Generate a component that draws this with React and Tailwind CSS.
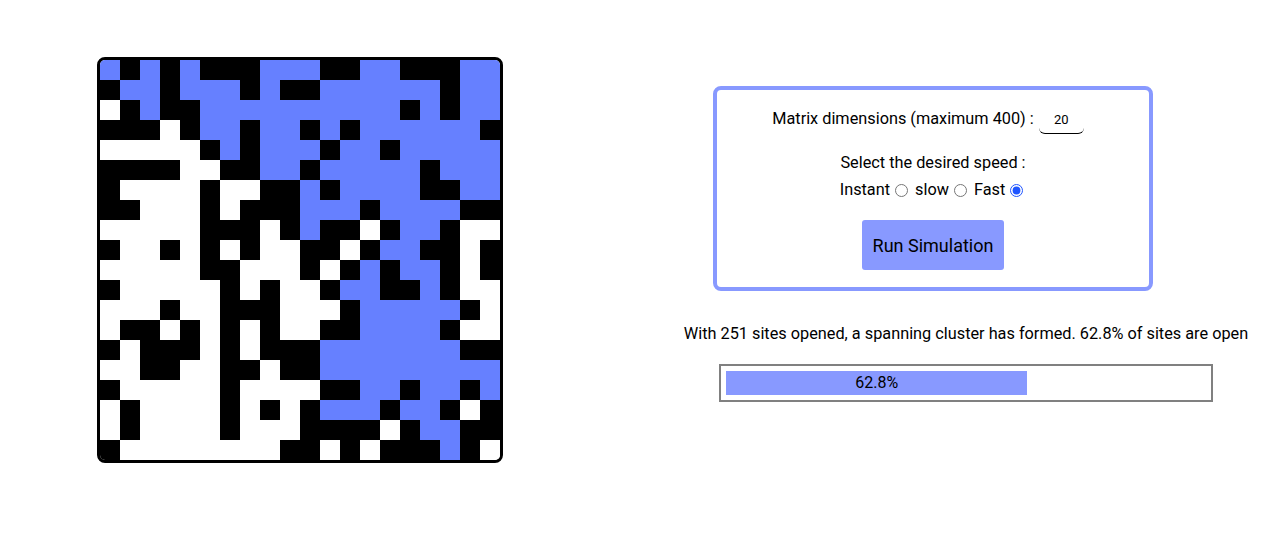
import React from "react";

const ROWS = [
  "BKBKBKKKBBBKKBBKKKBB",
  "KBBKBBBKBKKBBBBBBKBB",
  "WKBKKBBBBBBBBBBKBKBB",
  "KKKWKBBKBBKBKBBBBBBK",
  "WWWWWKBKBBBKBBKBBBBB",
  "KKKKWWKKBBKBBBBBKBBB",
  "KWWWWKWWKKBKBBBBKKBB",
  "KKWWWKWKKKBBBKBBBBKK",
  "WWWWWKKKWKBKKWKBBKWW",
  "KWWKWKWKWWKKWKBBKKWK",
  "WWWWWKKWWWKWKBKBBKWK",
  "KWWWWWKWKWWKBBKKBKWW",
  "WWWKWWKKKWWWKBBBBBKW",
  "WKKWKWKWKWWKKBBBBKWW",
  "KWKKKWKWKKKBBBBBBBKK",
  "WWKKWWKKWKKBBBBBBBBB",
  "KWWWWWKWWWWKKBBKBBKB",
  "WKWWWWKWKWKBBBKBBKWK",
  "WKWWWWKWWWKKKKWKBBKK",
  "KWWWWWWWWKKWKWKKKBKW",
];

const cellClass = {
  B: "bg-[#6680ff]",
  K: "bg-black",
  W: "bg-white",
};

function Grid() {
  return (
    <div className="w-[406px] h-[406px] border-[3px] border-black rounded-[8px] overflow-hidden shrink-0">
      <div className="grid grid-cols-[repeat(20,20px)] grid-rows-[repeat(20,20px)]">
        {ROWS.map((row, r) =>
          row.split("").map((c, i) => (
            <div key={r + "-" + i} className={cellClass[c]} />
          ))
        )}
      </div>
    </div>
  );
}

export default function App() {
  const pct = 62.8;
  return (
    <div className="w-[1277px] h-[549px] bg-white text-black font-['Roboto',sans-serif] flex items-start pl-[97px] pt-[57px]">
      <Grid />
      <div className="ml-[163px] mt-[29px] w-[600px] flex flex-col items-start">
        <div className="ml-[47px] w-[440px] h-[205px] border-4 border-[#8899ff] rounded-[8px] flex flex-col items-center pt-[15px]">
          <div className="flex items-center h-[28px] text-[16.3px] leading-6">
            <span>Matrix dimensions (maximum 400) :</span>
            <input
              defaultValue="20"
              className="ml-[5px] mr-[10px] mt-[2px] w-[45px] h-[28px] border-b border-black rounded-md text-[13px] text-center outline-none bg-transparent"
            />
          </div>
          <div className="mt-[18px] text-[16.3px] leading-6">Select the desired speed :</div>
          <div className="mt-[3px] flex items-center text-[16.3px] leading-6">
            <span>Instant</span>
            <input type="radio" name="speed" readOnly className="ml-[5px] mr-[3px] w-[13px] h-[13px]" />
            <span className="ml-[4px]">slow</span>
            <input type="radio" name="speed" readOnly className="ml-[5px] mr-[3px] w-[13px] h-[13px]" />
            <span className="ml-[4px]">Fast</span>
            <input type="radio" name="speed" defaultChecked className="ml-[5px] mr-[3px] w-[13px] h-[13px] accent-[#1f55ff]" />
          </div>
          <button className="mt-[18px] w-[142px] h-[50px] bg-[#8899ff] rounded-[3px] text-[18px] text-black">
            Run Simulation
          </button>
        </div>
        <div className="mt-[31px] w-full text-center text-[16.3px] leading-6 whitespace-nowrap">
          With 251 sites opened, a spanning cluster has formed. 62.8% of sites are open
        </div>
        <div className="ml-[53px] mt-[18px] w-[494px] h-[38px] border-2 border-[#808080] p-[5px]">
          <div
            className="h-[24px] bg-[#8899ff] flex items-center justify-center text-[16px] leading-6"
            style={{ width: pct + "%" }}
          >
            62.8%
          </div>
        </div>
      </div>
    </div>
  );
}
